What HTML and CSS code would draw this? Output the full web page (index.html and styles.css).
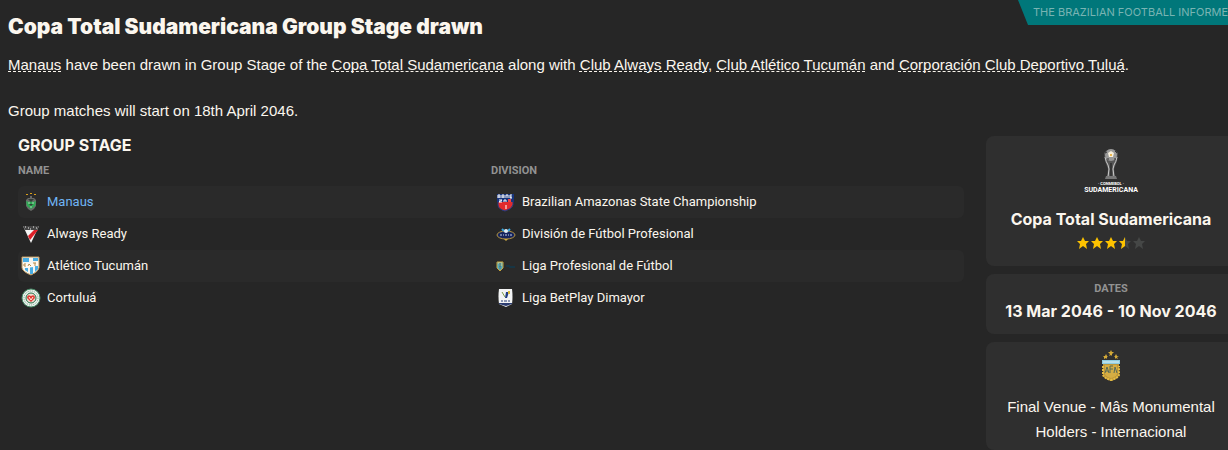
FILE: index.html
```html
<!DOCTYPE html>
<html lang="en">

<head>
    <meta charset="UTF-8">
    <meta name="viewport" content="width=device-width, initial-scale=1.0">
    <title>Copa Total Sudamericana Group Stage drawn</title>
    <link rel="stylesheet" href="styles.css">
</head>

<body>
    <header class="header">
        <h1>Copa Total Sudamericana Group Stage drawn</h1>
        <div class="source">THE BRAZILIAN FOOTBALL INFORMER</div>
    </header>

    <div class="story">
        <p><a href="#">Manaus</a> have been drawn in Group Stage of the <a href="#">Copa Total Sudamericana</a> along with <a href="#">Club Always Ready</a>, <a href="#">Club Atlético Tucumán</a> and <a href="#">Corporación Club Deportivo Tuluá</a>.</p>
        <p>Group matches will start on 18th April 2046.</p>
    </div>

    <div class="content">
        <main class="group">
            <h2>GROUP STAGE</h2>
            <table>
                <thead>
                    <tr>
                        <th>NAME</th>
                        <th>DIVISION</th>
                    </tr>
                </thead>
                <tbody>
                    <tr>
                        <td>
                            <div class="cell">
                                <svg class="badge" viewBox="0 0 20 20">
                                    <path d="M5 2h2v1H5zM9 1h2v1H9zM13 2h2v1h-2z" fill="#d9a01c" />
                                    <path d="M9 4h2v2h2l2 2v6l-2 3-3 2-3-2-2-3V8l2-2h2z" fill="#686a68" />
                                    <path d="M5 9l3 1 2-1 2 1 3-1-1 5-4 3-4-3z" fill="#2fa854" />
                                    <path d="M7 7h6l-3 3zM8 12h4l-2 2z" fill="#343b37" />
                                    <path d="M7 11h2M11 11h2M9 15h2" stroke="#a9d6b4" />
                                </svg>
                                <a href="#" class="own-team">Manaus</a>
                            </div>
                        </td>
                        <td>
                            <div class="cell">
                                <svg class="badge" viewBox="0 0 20 20">
                                    <path d="M2 9h15v4q-1 4-8 6-7-2-7-6z" fill="#e12b2d" stroke="#1f3d85" />
                                    <path d="M1 2h17v8H1z" fill="#17347d" />
                                    <path d="M2 6V3h2v3M2 5h2M6 6V3h2v3M6 5h2M10 6V3h2v3M16 3h-2v3h2M14 5h2M3 8h3l-3 2h3M8 10V8h2v2" fill="none" stroke="#fff" />
                                    <path d="M12 7h3v3h-3z" fill="#f04445" />
                                    <path d="M9 13h2v4H9z" fill="#f59a96" />
                                </svg>
                                <span>Brazilian Amazonas State Championship</span>
                            </div>
                        </td>
                    </tr>
                    <tr>
                        <td>
                            <div class="cell">
                                <svg class="badge" viewBox="0 0 20 20">
                                    <path d="M2 2h16l-8 17z" fill="#f4f4f4" />
                                    <path d="M13 6h4L9 16l-2-4z" fill="#df1f27" />
                                    <path d="M2 2h16l-2 4H4z" fill="#454545" />
                                    <path d="M4 3h1M7 4h1M9 5h1M12 3h1M15 4h1" stroke="#eee" />
                                </svg>
                                <span>Always Ready</span>
                            </div>
                        </td>
                        <td>
                            <div class="cell">
                                <svg class="badge" viewBox="0 0 20 20">
                                    <ellipse cx="10" cy="11" rx="9" ry="4" fill="#18255c" stroke="#b49543" />
                                    <path d="M6 5l2 2M14 5l-2 2" stroke="#37a5dc" stroke-width="2" />
                                    <circle cx="10" cy="7" r="2" fill="#e2eef7" />
                                    <path d="M3 9h14v3H3z" fill="#13245f" />
                                    <path d="M4 11h2M7 11h1M9 11h2M12 11h1M14 11h2" stroke="#c5d0e7" />
                                    <path d="M8 15h4l-2 2z" fill="#d1ae45" />
                                </svg>
                                <span>División de Fútbol Profesional</span>
                            </div>
                        </td>
                    </tr>
                    <tr>
                        <td>
                            <div class="cell">
                                <svg class="badge" viewBox="0 0 20 20">
                                    <path d="M1 1h17v11q-1 4-8 7-8-3-9-7z" fill="#f6f5ee" stroke="#b9965f" />
                                    <path d="M2 2h6v4H2zM12 2h5v3h-5zM4 12h3v4l-3-2zM9 11h3v7H9zM14 10h3v3l-3 3z" fill="#48ade4" />
                                    <path d="M2 7q8 3 15-2v4q-7 4-15 2z" fill="#fffaf0" />
                                    <path d="M5 8H3v2h2M7 10l1-2 2 2M12 7h3M14 7v3" fill="none" stroke="#b58b4b" />
                                </svg>
                                <span>Atlético Tucumán</span>
                            </div>
                        </td>
                        <td>
                            <div class="cell">
                                <svg class="badge" viewBox="0 0 20 20">
                                    <path d="M1 6h6v6l-3 3-3-3z" fill="#54a9bd" stroke="#c7a43c" />
                                    <path d="M2 7h4M3 9h3M3 12h2" stroke="#e5d385" />
                                    <path d="M4 7v6" stroke="#225e77" />
                                    <path d="M10 9h4v1h5v2h-6v-1h-3z" fill="#173544" />
                                </svg>
                                <span>Liga Profesional de Fútbol</span>
                            </div>
                        </td>
                    </tr>
                    <tr>
                        <td>
                            <div class="cell">
                                <svg class="badge" viewBox="0 0 20 20">
                                    <circle cx="10" cy="10" r="9" fill="#e9f0eb" stroke="#488c68" />
                                    <circle cx="10" cy="10" r="7" fill="none" stroke="#78a78c" stroke-dasharray="1 1" />
                                    <circle cx="10" cy="10" r="5" fill="#f3d8cd" stroke="#23744a" />
                                    <path d="M10 14l-4-4q0-4 4-2 4-2 4 2z" fill="#e23b35" />
                                    <path d="M8 9l2 3 2-3" fill="none" stroke="#fff1de" />
                                </svg>
                                <span>Cortuluá</span>
                            </div>
                        </td>
                        <td>
                            <div class="cell">
                                <svg class="badge" viewBox="0 0 20 20">
                                    <path d="M3 1h13q1 8 0 15l-6 3-7-3q-1-8 0-15z" fill="#f2f3f4" />
                                    <path d="M10 4h3l-2 6H9z" fill="#203c83" />
                                    <path d="M6 4l3 5" stroke="#7b9a45" />
                                    <path d="M12 3h2v3h-2z" fill="#d8b738" />
                                    <path d="M5 13h2M8 13h3M12 13h2" stroke="#263c76" />
                                    <path d="M3 15h13v1l-6 2-7-2z" fill="#2b3c70" />
                                </svg>
                                <span>Liga BetPlay Dimayor</span>
                            </div>
                        </td>
                    </tr>
                </tbody>
            </table>
        </main>

        <aside class="sidebar">
            <section class="card competition">
                <svg class="trophy" viewBox="0 0 56 46">
                    <path d="M21 5q7-8 14 0l-1 8-3 8 1 8h-8l1-8-3-8z" fill="#555" />
                    <path d="M22 9q1 5 3 8l1 4-1 8M34 9q-1 5-3 8l-1 4 1 8" fill="none" stroke="#ccc" />
                    <path d="M28 15v14" stroke="#353535" stroke-width="2" />
                    <circle cx="28" cy="7" r="6" fill="#999" />
                    <path d="M25 5l3-2 3 2-1 4h-4z" fill="#f8f0dd" />
                    <path d="M22 5l2-1M32 3l2 2M24 11h2M31 11h2" stroke="#333" />
                    <circle cx="28" cy="7" r="1" fill="#e9a51e" />
                    <path d="M23 28h10l1 3H22z" fill="#777" />
                    <text x="28" y="37" class="logo-small">· CONMEBOL ·</text>
                    <text x="28" y="44" class="logo-name">SUDAMERICANA</text>
                </svg>
                <h3>Copa Total Sudamericana</h3>
                <svg class="stars" viewBox="0 0 70 14" role="img" aria-label="3.5 out of 5">
                    <defs>
                        <path id="star" d="M7 1l2 4h4l-3 3 1 5-4-3-4 3 1-5-3-3h4z" />
                    </defs>
                    <g fill="#fcc200">
                        <use href="#star" />
                        <use href="#star" x="14" />
                        <use href="#star" x="28" />
                    </g>
                    <use href="#star" x="42" fill="#454746" />
                    <path d="M49 1l-2 4h-4l3 3-1 5 4-3z" fill="#fcc200" />
                    <use href="#star" x="56" fill="#454746" />
                </svg>
            </section>

            <section class="card dates">
                <h4>DATES</h4>
                <p>13 Mar 2046 - 10 Nov 2046</p>
            </section>

            <section class="card venue">
                <svg class="crest" viewBox="0 0 20 32">
                    <path d="M10 0l1 2h2l-2 2v2l-1-1-2 1 1-2-2-2h2zM5 4l1 2h1L6 7v2L5 8 3 9V7L2 6h2zM15 4l1 2h2l-2 1 1 2-2-1-1 1V7l-1-1h1z" fill="#d3a937" />
                    <path d="M2 12h16v13q-1 4-8 6-7-2-8-6z" fill="#bd9637" />
                    <path d="M2 16v9q1 3 8 5 7-2 8-5v-9" fill="none" stroke="#e4bd45" stroke-width="2" stroke-dasharray="2 1" />
                    <path d="M4 15h12v9q-1 3-6 4-5-1-6-4z" fill="#d4ad43" />
                    <path d="M1 10h18v4H1z" fill="#8dcce0" />
                    <path d="M2 12h16" stroke="#e1f3f4" />
                    <path d="M4 23l2-6 2 6M5 21h2M9 23v-7h3M9 19h3M13 23l1-6 2 6" fill="none" stroke="#576c58" />
                </svg>
                <p>Final Venue - Mâs Monumental</p>
                <p>Holders - Internacional</p>
            </section>
        </aside>
    </div>
</body>

</html>
```
FILE: styles.css
```css
* {
    margin: 0;
    padding: 0;
    box-sizing: border-box;
}

body {
    font-family: 'Liberation Sans', Arial, sans-serif;
    font-size: 15px;
    line-height: 24px;
    background: #262626;
    color: #fbf6ee;
    overflow-x: hidden;
}

h1,
h2,
h3,
.source,
.dates p {
    font-family: Inter, sans-serif;
}

.header {
    display: flex;
    justify-content: space-between;
    align-items: flex-start;
    padding-left: 8px;
}

h1 {
    padding-top: 13px;
    font-size: 21px;
    font-weight: 900;
    line-height: 28px;
}

.source {
    width: 210px;
    height: 25px;
    padding-left: 15px;
    overflow: hidden;
    background: #00777a;
    color: #79b4b3;
    clip-path: polygon(0 0, 100% 0, 100% 100%, 10px 100%);
    font-size: 11px;
    white-space: nowrap;
}

.story {
    padding: 12px 8px 13px;
}

.story p + p {
    margin-top: 22px;
}

.story a {
    color: inherit;
    text-decoration: underline dashed 1px;
    text-decoration-skip-ink: none;
    text-underline-offset: 1px;
}

.content {
    display: grid;
    grid-template-columns: 1fr 250px;
    gap: 22px;
    margin-right: -8px;
    padding-left: 18px;
}

h2 {
    font-size: 16px;
    font-weight: 700;
    line-height: 18px;
}

table {
    width: 100%;
    table-layout: fixed;
    border-collapse: separate;
    border-spacing: 0;
    font-family: Roboto, sans-serif;
    font-size: 13px;
}

th {
    height: 32px;
    padding-top: 2px;
    color: #929292;
    font-size: 11px;
    font-weight: 700;
    text-align: left;
}

td {
    height: 32px;
}

tbody tr:nth-child(odd) td {
    background: #2a2a2a;
}

td:first-child {
    padding-left: 3px;
    border-radius: 6px 0 0 6px;
}

td:last-child {
    padding-left: 5px;
    border-radius: 0 6px 6px 0;
}

.cell {
    display: flex;
    align-items: center;
    gap: 6px;
}

.badge {
    width: 20px;
    height: 20px;
}

.own-team {
    color: #70b5f5;
    text-decoration: none;
}

.sidebar {
    display: grid;
    gap: 8px;
    text-align: center;
}

.card {
    padding: 4px 8px;
    border-radius: 8px;
    background: #2f2f2f;
}

.card svg {
    display: block;
    margin: 0 auto;
}

.competition {
    padding: 12px 8px 11px;
}

.trophy {
    width: 56px;
    height: 46px;
}

.trophy text {
    font-family: Roboto, sans-serif;
    fill: #fff;
    text-anchor: middle;
}

.trophy .logo-small {
    font-size: 4px;
    font-weight: 700;
}

.trophy .logo-name {
    font-size: 7px;
    font-weight: 700;
}

h3 {
    margin-top: 13px;
    font-size: 16px;
    font-weight: 700;
}

.stars {
    width: 70px;
    height: 24px;
}

.dates {
    padding: 5px 8px 11px;
}

h4 {
    color: #929292;
    font-family: Roboto, sans-serif;
    font-size: 11px;
    font-weight: 700;
    line-height: 20px;
}

.dates p {
    font-size: 16px;
    font-weight: 700;
}

.venue {
    padding: 8px 8px 6px;
    line-height: 25px;
}

.crest {
    width: 20px;
    height: 32px;
}

.venue .crest {
    margin-bottom: 12px;
}
```
